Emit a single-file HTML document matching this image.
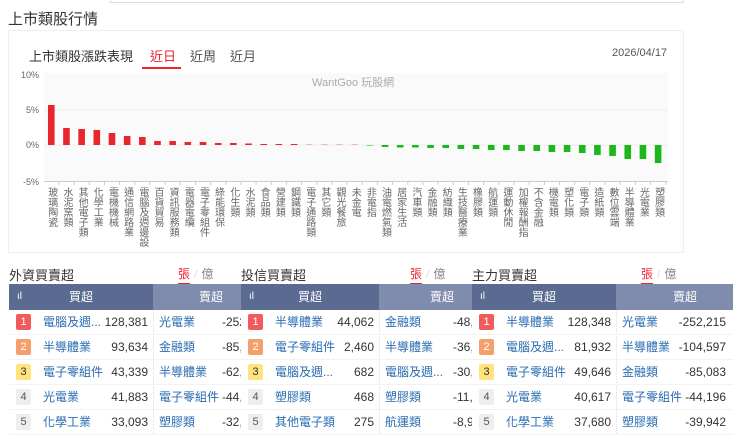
<!DOCTYPE html>
<html><head><meta charset="utf-8"><style>
*{margin:0;padding:0;box-sizing:border-box}
body{width:740px;height:438px;overflow:hidden;background:#fff;font-family:"Liberation Sans","Noto Sans CJK TC",sans-serif;position:relative;color:#333}
.abs{position:absolute}
.lbl{position:absolute;top:187px;writing-mode:vertical-rl;font-size:10px;line-height:11px;color:#666;width:11px;letter-spacing:0}
.sec-t{position:absolute;top:265px;font-size:13px;color:#333}
.zh{position:absolute;top:265px;font-size:12px;color:#888}
.zh b{color:#e23;font-weight:normal;border-bottom:2px solid #e23;padding-bottom:2px}
.zh i{font-style:normal;color:#ddd;margin:0 4px}
.hd{position:absolute;top:284px;height:26px;line-height:26px;color:#fff;font-size:12px;text-align:center}
.cell{position:absolute;height:25px;line-height:25px;font-size:12px;white-space:nowrap;overflow:hidden}
.nm{color:#2a6cb0}
.num{color:#333;text-align:right}
.bd{position:absolute;width:15px;height:16px;line-height:16px;text-align:center;font-size:11px;border-radius:2px}
.clip{position:absolute;top:310px;height:125px;overflow:hidden}
</style></head><body>
<div class="abs" style="left:110px;top:-2px;width:574px;height:5px;border:1px solid #ddd;border-top:none"></div>
<div class="abs" style="left:8px;top:8px;font-size:15px;color:#333">上市類股行情</div>
<div class="abs" style="left:8px;top:30px;width:676px;height:223px;border:1px solid #eee"></div>
<div class="abs" style="left:29px;top:46px;font-size:13px;color:#333">上市類股漲跌表現</div>
<div class="abs" style="left:150px;top:46px;font-size:13px;color:#e23">近日</div>
<div class="abs" style="left:142px;top:67px;width:39px;height:2px;background:#e23"></div>
<div class="abs" style="left:190px;top:46px;font-size:13px;color:#555">近周</div>
<div class="abs" style="left:230px;top:46px;font-size:13px;color:#555">近月</div>
<div class="abs" style="left:612px;top:47px;font-size:11px;color:#555">2026/04/17</div>
<svg class="abs" style="left:0;top:0" width="740" height="260">
<rect x="44" y="73" width="624" height="108" fill="#fafafa"/>
<line x1="44" y1="110" x2="668" y2="110" stroke="#eee"/>
<line x1="44" y1="145" x2="668" y2="145" stroke="#eee"/>
<line x1="44" y1="181.5" x2="668" y2="181.5" stroke="#ccc"/>
<g font-size="9" fill="#666" text-anchor="end" font-family="Liberation Sans">
<text x="39" y="78">10%</text><text x="39" y="113">5%</text><text x="39" y="148">0%</text><text x="39" y="185">-5%</text></g>
<text x="312" y="86" font-size="11" fill="#aaa">WantGoo 玩股網</text>
<g id="bars"></g>
</svg>
<div id="labels"></div>
<script>
var vals=[40,17,16,15,12,9,8,4,4,3,3,2,2,1.5,1,1,1,0.3,0.3,0.3,0.3,-0.5,-2,-2.5,-2.5,-3,-3,-4,-4,-5,-5,-6,-6,-7,-7,-8,-10,-11,-14,-14,-18];
var names=["玻璃陶瓷","水泥窯類","其他電子類","化學工業","電機機械","通信網路業","電腦及週邊設","百貨貿易","資訊服務類","電器電纜","電子零組件","綠能環保","化生類","水泥類","食品類","營建類","鋼鐵類","電子通路類","其它類","觀光餐旅","未金電","非電指","油電燃氣類","居家生活","汽車類","金融類","紡織類","生技醫療業","橡膠類","航運類","運動休閒","加權報酬指","不含金融","機電類","塑化類","電子類","造紙類","數位雲端","半導體業","光電業","塑膠類"];
var g=document.getElementById('bars'),s='',L='';
for(var i=0;i<41;i++){var cx=51.3+i*15.17,v=vals[i];
if(v>0)s+='<rect x="'+(cx-3.3)+'" y="'+(145-v)+'" width="6.6" height="'+v+'" fill="#e8262d"/>';
else s+='<rect x="'+(cx-3.3)+'" y="145" width="6.6" height="'+(-v)+'" fill="#1ab81a"/>';
s+='<line x1="'+(cx+7.6)+'" y1="181" x2="'+(cx+7.6)+'" y2="185" stroke="#ccc"/>';
L+='<div class="lbl" style="left:'+(cx-5.5)+'px">'+names[i]+'</div>';}
g.innerHTML=s;document.getElementById('labels').innerHTML=L;
</script>
<div class="abs" style="left:8px;top:252px;width:676px;height:1px;background:#eee"></div>

<div class="sec-t" style="left:9px">外資買賣超</div>
<div class="zh" style="left:178px"><b>張</b><i>/</i>億</div>
<div class="sec-t" style="left:241px">投信買賣超</div>
<div class="zh" style="left:410px"><b>張</b><i>/</i>億</div>
<div class="sec-t" style="left:472px">主力買賣超</div>
<div class="zh" style="left:641px"><b>張</b><i>/</i>億</div>

<div id="tables"></div>
<script>
var secs=[
 {x:9,bw:144,sw:88,buy:[["電腦及週...","128,381"],["半導體業","93,634"],["電子零組件","43,339"],["光電業","41,883"],["化學工業","33,093"]],
  sell:[["光電業","-252,215"],["金融類","-85,083"],["半導體業","-62,000"],["電子零組件","-44,196"],["塑膠類","-32,000"]]},
 {x:241,bw:138,sw:93,buy:[["半導體業","44,062"],["電子零組件","2,460"],["電腦及週...","682"],["塑膠類","468"],["其他電子類","275"]],
  sell:[["金融類","-48,100"],["半導體業","-36,800"],["電腦及週...","-30,500"],["塑膠類","-11,500"],["航運類","-8,900"]]},
 {x:472,bw:144,sw:117,buy:[["半導體業","128,348"],["電腦及週...","81,932"],["電子零組件","49,646"],["光電業","40,617"],["化學工業","37,680"]],
  sell:[["光電業","-252,215"],["半導體業","-104,597"],["金融類","-85,083"],["電子零組件","-44,196"],["塑膠類","-39,942"]]}];
var bc=[["#f25b5b","#fff"],["#f5a06a","#fff"],["#ffe37c","#333"],["#eee","#555"],["#eee","#555"]];
var h='';
secs.forEach(function(S){var x=S.x,sx=x+S.bw;
h+='<div class="hd" style="left:'+x+'px;width:'+S.bw+'px;background:#5b6a91"><span style="position:absolute;left:8px;font-size:10px">ıl</span>買超</div>';
h+='<div class="hd" style="left:'+sx+'px;width:'+S.sw+'px;background:#7f8cad;text-align:right;padding-right:'+(S.sw>100?36:18)+'px">賣超</div>';
h+='<div class="abs" style="left:'+sx+'px;top:310px;width:1px;height:125px;border-left:1px dotted #ddd"></div>';
var sc='<div class="clip" style="left:'+sx+'px;width:'+S.sw+'px">';
for(var r=0;r<5;r++){var y=310+r*25;
h+='<div class="bd" style="left:'+(x+7)+'px;top:'+(y+4)+'px;background:'+bc[r][0]+';color:'+bc[r][1]+'">'+(r+1)+'</div>';
h+='<div class="cell nm" style="left:'+(x+34)+'px;top:'+y+'px">'+S.buy[r][0]+'</div>';
h+='<div class="cell num" style="left:'+(x+80)+'px;width:'+(S.bw-85)+'px;top:'+y+'px">'+S.buy[r][1]+'</div>';
sc+='<div class="cell nm" style="left:6px;top:'+(r*25)+'px">'+S.sell[r][0]+'</div>';
if(S.sw>100)sc+='<div class="cell num" style="left:50px;width:'+(S.sw-57)+'px;top:'+(r*25)+'px">'+S.sell[r][1]+'</div>';
else sc+='<div class="cell num" style="left:'+(S.sw-19)+'px;width:60px;top:'+(r*25)+'px;text-align:left;overflow:visible">'+S.sell[r][1]+'</div>';
h+='<div class="abs" style="left:'+x+'px;top:'+(y+24)+'px;width:'+(S.bw+S.sw)+'px;height:1px;background:#f3f3f3"></div>';}
h+=sc+'</div>';
});
document.getElementById('tables').innerHTML=h;
</script>
</body></html>
